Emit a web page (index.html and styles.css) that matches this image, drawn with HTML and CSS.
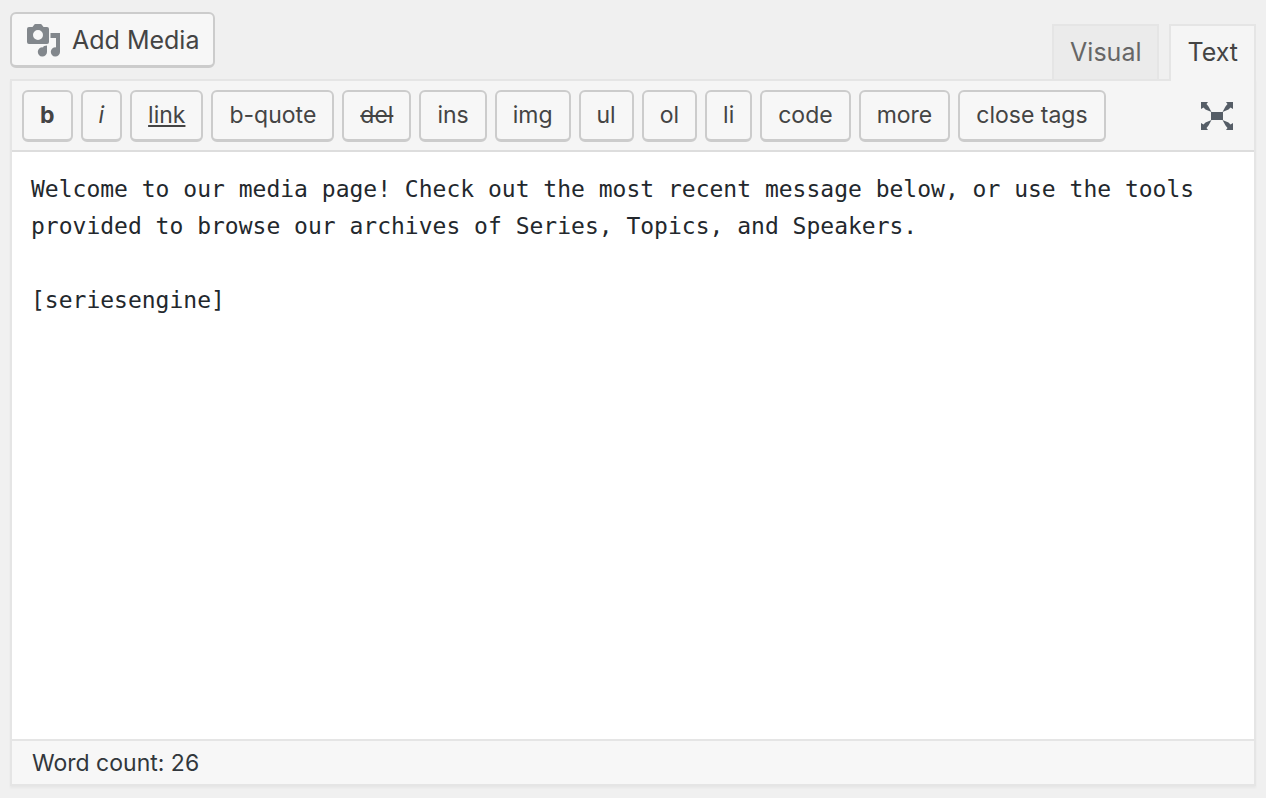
FILE: index.html
```html
<!DOCTYPE html>
<html lang="en">
<head>
<meta charset="utf-8">
<title>Page editor</title>
<meta name="viewport" content="width=device-width, initial-scale=1">
<link rel="stylesheet" href="styles.css">
</head>
<body>
<main class="editor-wrap">
  <header class="editor-tools">
    <button type="button" class="button button-media">
      <svg class="media-icon" viewBox="0 0 33 33" aria-hidden="true">
        <path fill-rule="evenodd" d="M2 3h3.500l1.500-2q.5-1 1.500-1h5q1 0 1.500 1l1.500 2H20q2 0 2 2v13q0 2-2 2H2q-2 0-2-2V5q0-2 2-2zM11 6a5 5 0 1 0 0 10a5 5 0 0 0 0-10z"/>
        <path d="M23.500 9H33v19a4.600 4.600 0 1 1-4-4.600V14h-5.500z"/>
        <path d="M20 21.500V28a4.600 4.600 0 1 1-4-4.600Q16.500 21.500 20 21.500z"/>
      </svg>
      Add Media
    </button>
    <div class="tabs" role="tablist">
      <button type="button" class="tab" role="tab" aria-selected="false">Visual</button>
      <button type="button" class="tab tab-active" role="tab" aria-selected="true">Text</button>
    </div>
  </header>
  <section class="editor">
    <div class="toolbar" role="toolbar" aria-label="Formatting">
      <button type="button" class="button tag-bold">b</button>
      <button type="button" class="button tag-italic">i</button>
      <button type="button" class="button tag-link">link</button>
      <button type="button" class="button">b-quote</button>
      <button type="button" class="button tag-del">del</button>
      <button type="button" class="button">ins</button>
      <button type="button" class="button">img</button>
      <button type="button" class="button">ul</button>
      <button type="button" class="button">ol</button>
      <button type="button" class="button">li</button>
      <button type="button" class="button">code</button>
      <button type="button" class="button">more</button>
      <button type="button" class="button">close tags</button>
      <button type="button" class="fullscreen" aria-label="Distraction-free writing mode">
        <svg class="fullscreen-icon" viewBox="0 0 32 28" aria-hidden="true">
          <path d="M10 10h12v8H10z"/>
          <path d="M0 0h7L5.500 2 7.500 4.500 10.500 10 4.500 7.500 2.500 5.500 0 7zM32 0h-7l1.500 2-2 2.500L21.500 10l6-2.500 2-2L32 7zM0 28h7l-1.500-2 2-2.500L10.500 18l-6 2.500-2 2L0 21zM32 28h-7l1.500-2-2-2.500L21.500 18l6 2.500 2 2L32 21z"/>
        </svg>
      </button>
    </div>
    <textarea class="content" aria-label="Content" spellcheck="false">Welcome to our media page! Check out the most recent message below, or use the tools provided to browse our archives of Series, Topics, and Speakers.

[seriesengine]</textarea>
    <footer class="status">Word count: 26</footer>
  </section>
</main>
</body>
</html>
```
FILE: styles.css
```css
* {
  box-sizing: border-box;
}

body {
  margin: 0;
  background: #f0f0f0;
  color: #32373c;
  font-family: Inter, Roboto, "Liberation Sans", sans-serif;
  font-size: 23px;
  line-height: 32px;
}

button {
  margin: 0;
  font: inherit;
  cursor: pointer;
}

.editor-wrap {
  display: flex;
  flex-direction: column;
  min-height: 100vh;
  padding: 12px 10px;
}

.editor-tools {
  display: flex;
  justify-content: space-between;
  align-items: flex-start;
  font-size: 25px;
}

.button {
  padding: 8px 16px;
  border: 2px solid #ccc;
  border-bottom-width: 3px;
  border-radius: 6px;
  background: #f7f7f7;
  color: #444;
  line-height: 31px;
  white-space: nowrap;
}

.button-media {
  display: flex;
  align-items: center;
  gap: 12px;
  padding: 10px 14px 8px 15px;
}

.media-icon {
  width: 33px;
  height: 33px;
  fill: #82878c;
}

.tabs {
  display: flex;
  gap: 10px;
  margin-top: 12px;
}

.tab {
  padding: 10px 16px 11px;
  border: 2px solid #e5e5e5;
  border-bottom: 0;
  background: #ebebeb;
  color: #666;
}

.tab-active {
  z-index: 1;
  margin-bottom: -2px;
  padding-bottom: 13px;
  background: #f5f5f5;
  color: #444;
}

.editor {
  display: flex;
  flex: 1;
  flex-direction: column;
  border: 2px solid #e5e5e5;
  box-shadow: 0 2px 2px #0000000a;
}

.toolbar {
  display: flex;
  flex-wrap: wrap;
  gap: 8px;
  padding: 9px 21px 8px 10px;
  border-bottom: 2px solid #ddd;
  background: #f5f5f5;
}

.tag-bold {
  font-weight: 700;
}

.tag-italic {
  font-style: italic;
}

.tag-link {
  text-decoration: underline;
}

.tag-del {
  text-decoration: line-through;
}

.fullscreen {
  display: flex;
  align-items: center;
  margin-left: auto;
  padding: 0;
  border: 0;
  background: none;
}

.fullscreen-icon {
  width: 32px;
  height: 28px;
  fill: #555d66;
}

.content {
  display: block;
  flex: 1;
  width: 100%;
  padding: 19px;
  border: 0;
  outline: 0;
  background: #fff;
  color: #23282d;
  font-family: "DejaVu Sans Mono", monospace;
  font-size: 23px;
  line-height: 37px;
  resize: none;
}

.status {
  padding: 6px 20px 5px;
  border-top: 2px solid #e5e5e5;
  background: #f7f7f7;
}
```
